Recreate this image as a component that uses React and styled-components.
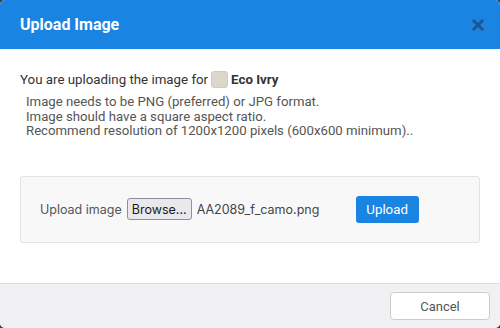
import React from 'react'
import styled, { createGlobalStyle } from 'styled-components'

const GlobalStyle = createGlobalStyle`
  html, body {
    margin: 0;
    padding: 0;
    background: #3a3a3a;
  }
  body {
    font-family: Roboto, "Liberation Sans", sans-serif;
  }
`

const Modal = styled.div`
  width: 500px;
  height: 328px;
  background: #fff;
  border-radius: 5px;
  overflow: hidden;
  display: flex;
  flex-direction: column;
`

const Header = styled.div`
  height: 49px;
  background: #1a84e2;
  display: flex;
  align-items: center;
  justify-content: space-between;
  padding: 0 15px 0 20px;
  box-sizing: border-box;
`

const Title = styled.h3`
  margin: 0;
  font-size: 16px;
  font-weight: 700;
  color: #fff;
`

const Close = styled.button`
  border: 0;
  background: none;
  padding: 0;
  width: 14px;
  height: 14px;
  display: flex;
  cursor: pointer;
`

const Body = styled.div`
  flex: 1;
  padding: 21px 20px 0;
`

const Intro = styled.p`
  margin: 0;
  font-size: 13.3px;
  color: #333;
  display: flex;
  align-items: center;
  height: 18px;
`

const Swatch = styled.span`
  display: inline-block;
  width: 17px;
  height: 17px;
  margin: 0 3px 0 3px;
  border-radius: 3px;
  background: ${p => p.color};
  border: 1px solid #d2cbbf;
  box-sizing: border-box;
`

const Strong = styled.b`
  font-weight: 700;
  color: #333;
`

const Notes = styled.div`
  margin: 7px 0 0 6px;
  font-size: 13.2px;
  line-height: 14.5px;
  color: #555;
`

const Panel = styled.div`
  margin-top: 37px;
  height: 67px;
  background: #f8f8f9;
  border: 1px solid #e3e3e5;
  border-radius: 3px;
  box-sizing: border-box;
  display: flex;
  align-items: center;
  padding: 0 19px;
  font-family: Inter, "Noto Sans", sans-serif;
  font-size: 12.5px;
  color: #555;
`

const Label = styled.span`
  margin-right: 5px;
`

const Browse = styled.span`
  display: inline-flex;
  align-items: center;
  height: 22px;
  padding: 0 4px;
  border: 1px solid #8f8f9d;
  border-radius: 3px;
  background: #e9e9ed;
  color: #1a1a1a;
  box-sizing: border-box;
  margin-right: 5px;
`

const FileName = styled.span`
  color: #444;
  width: 159px;
`

const Primary = styled.button`
  height: 27px;
  width: 63px;
  padding: 0;
  border: 0;
  border-radius: 3px;
  background: #1a84e2;
  color: #fff;
  font-family: Roboto, "Liberation Sans", sans-serif;
  font-size: 13.3px;
`

const Footer = styled.div`
  height: 45px;
  border-top: 1px solid #ddd;
  background: #f1f1f3;
  display: flex;
  justify-content: flex-end;
  align-items: flex-start;
  padding: 8px 10px 0;
  box-sizing: border-box;
`

const Secondary = styled.button`
  width: 100px;
  height: 28px;
  border: 1px solid #ccc;
  border-radius: 4px;
  background: #fff;
  color: #555;
  font-family: Roboto, "Liberation Sans", sans-serif;
  font-size: 13px;
`

export default function App() {
  return (
    <>
      <GlobalStyle />
      <Modal>
        <Header>
          <Title>Upload Image</Title>
          <Close aria-label="Close">
            <svg width="14" height="14" viewBox="0 0 14 14">
              <path d="M3 3 L11 11 M11 3 L3 11" stroke="#1f5591" strokeWidth="3" strokeLinecap="square" />
            </svg>
          </Close>
        </Header>
        <Body>
          <Intro>
            You are uploading the image for <Swatch color="#ddd6cb" /> <Strong>Eco Ivry</Strong>
          </Intro>
          <Notes>
            Image needs to be PNG (preferred) or JPG format.<br />
            Image should have a square aspect ratio.<br />
            Recommend resolution of 1200x1200 pixels (600x600 minimum)..
          </Notes>
          <Panel>
            <Label>Upload image</Label>
            <Browse>Browse...</Browse>
            <FileName>AA2089_f_camo.png</FileName>
            <Primary>Upload</Primary>
          </Panel>
        </Body>
        <Footer>
          <Secondary>Cancel</Secondary>
        </Footer>
      </Modal>
    </>
  )
}
